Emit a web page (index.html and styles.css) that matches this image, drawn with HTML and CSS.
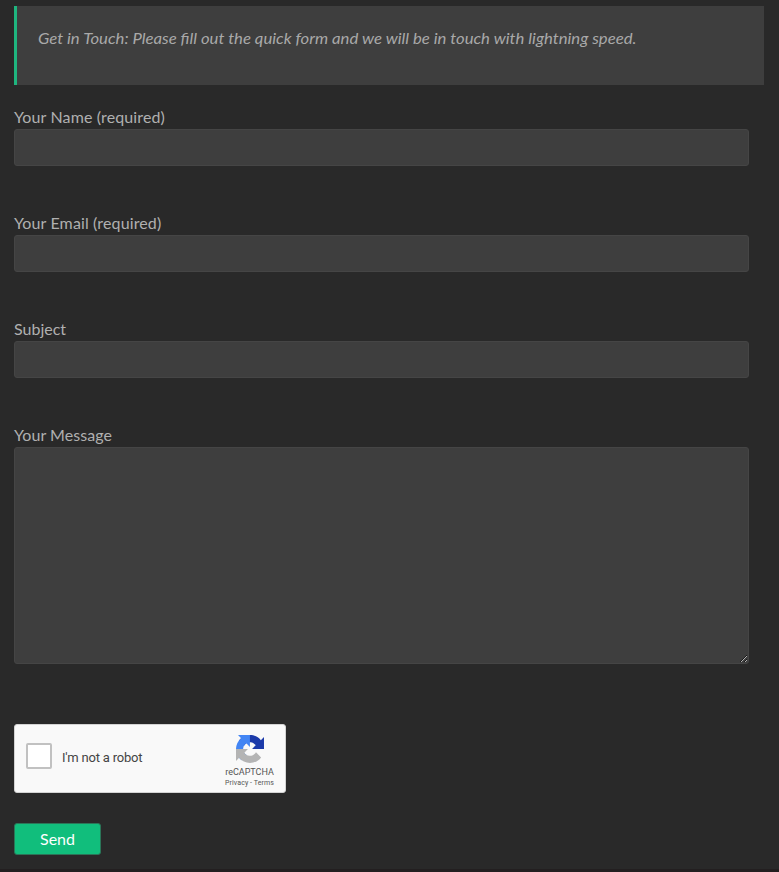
FILE: index.html
```html
<!DOCTYPE html>
<html lang="en">
<head>
<meta charset="utf-8">
<title>Contact</title>
<link rel="stylesheet" href="styles.css">
</head>
<body>
<main class="page">
  <blockquote class="intro"><span class="intro-text">Get in Touch: Please fill out the quick form and we will be in touch with lightning speed.</span></blockquote>
  <form class="form">
    <label class="field wide">Your Name (required)<input class="control" type="text"></label>
    <label class="field wide">Your Email (required)<input class="control" type="email"></label>
    <label class="field">Subject<input class="control" type="text"></label>
    <label class="field field-message">Your Message<textarea class="control message"></textarea></label>
    <div class="captcha">
      <span class="checkbox"></span>
      <span class="captcha-label">I'm not a robot</span>
      <div class="brand">
        <svg class="logo" viewBox="0 0 64 64">
          <path fill="#1c3aa9" d="M64 31.955l-.033-1.37V4.687l-7.16 7.16C50.948 4.674 42.033.093 32.05.093c-10.4 0-19.622 4.96-25.458 12.64l11.736 11.86a15.55 15.55 0 0 1 4.754-5.334c2.05-1.6 4.952-2.906 8.968-2.906.485 0 .86.057 1.135.163 4.976.393 9.288 3.14 11.828 7.124l-8.307 8.307L64 31.953"/>
          <path fill="#4285f4" d="M31.862.094l-1.37.033H4.594l7.16 7.16C4.58 13.147 0 22.06 0 32.046c0 10.4 4.96 19.622 12.64 25.458L24.5 45.768a15.55 15.55 0 0 1-5.334-4.754c-1.6-2.05-2.906-4.952-2.906-8.968 0-.485.057-.86.163-1.135.393-4.976 3.14-9.288 7.124-11.828l8.307 8.307L31.86.095"/>
          <path fill="#b4b4b4" d="M.001 32.045l.033 1.37v25.898l7.16-7.16c5.86 7.173 14.774 11.754 24.76 11.754 10.4 0 19.622-4.96 25.458-12.64l-11.736-11.86a15.55 15.55 0 0 1-4.754 5.334c-2.05 1.6-4.952 2.906-8.968 2.906-.485 0-.86-.057-1.135-.163-4.976-.393-9.288-3.14-11.828-7.124l8.307-8.307c-10.522.04-22.4.066-27.295-.005"/>
        </svg>
        <span class="brand-name">reCAPTCHA</span>
        <span class="brand-links">Privacy - Terms</span>
      </div>
    </div>
    <button class="send" type="button">Send</button>
  </form>
</main>
</body>
</html>
```

FILE: styles.css
```css
* { box-sizing: border-box; }
body {
  margin: 0;
  background: #292929;
  color: #b0b0b0;
  font: 16px/24px Lato, sans-serif;
}
.page {
  height: 872px;
  padding: 6px 15px 0 14px;
  border-bottom: 3px solid #231f20;
  overflow: hidden;
}
.intro {
  height: 79px;
  margin: 0 0 20px;
  padding: 20px 21px;
  border-left: 3px solid #1fb57f;
  background: #3e3e3e;
  color: #a9a9a9;
  font-style: italic;
}
.intro-text {
  display: inline-block;
  transform: scaleX(1.044);
  transform-origin: left;
  white-space: nowrap;
}
.form { width: 735px; }
.field {
  display: block;
  height: 106px;
}
.wide { letter-spacing: .13px; }
.field-message { height: 301px; letter-spacing: .06px; }
.control {
  display: block;
  width: 100%;
  height: 37px;
  margin: 0;
  padding: 6px 10px;
  border: 1px solid #454545;
  border-radius: 3px;
  background: #3e3e3e;
  color: inherit;
  font: inherit;
  outline: 0;
}
.message { height: 217px; resize: vertical; }
.captcha {
  display: flex;
  align-items: center;
  width: 272px;
  height: 69px;
  padding: 0 10px 4px 11px;
  border: 1px solid #d3d3d3;
  border-radius: 3px;
  background: #f9f9f9;
  color: #444;
  font-family: Roboto, sans-serif;
}
.checkbox {
  width: 26px;
  height: 26px;
  margin: 0 10px 1px 0;
  border: 2px solid #c1c1c1;
  border-radius: 2px;
  background: #fff;
}
.captcha-label {
  padding-top: 2px;
  font-size: 13px;
  letter-spacing: -.2px;
}
.brand {
  display: flex;
  flex-direction: column;
  align-items: center;
  align-self: flex-start;
  width: 51px;
  margin-left: auto;
  padding-top: 10px;
  color: #555;
  white-space: nowrap;
}
.logo { width: 28px; height: 28px; }
.brand-name { margin-top: 3px; font-size: 9px; line-height: 12px; }
.brand-links { font-size: 7px; line-height: 11px; letter-spacing: .08px; }
.send {
  display: block;
  width: 87px;
  height: 32px;
  margin: 30px 0 0;
  padding: 0;
  border: 1px solid #2b7558;
  border-radius: 3px;
  background: #11be7c;
  color: #fff;
  font: 16px/30px Lato, sans-serif;
}
```
